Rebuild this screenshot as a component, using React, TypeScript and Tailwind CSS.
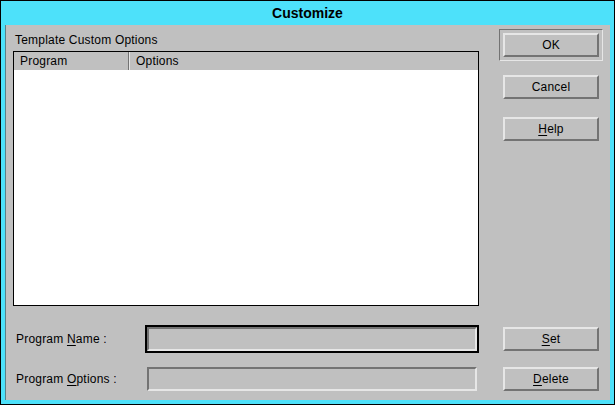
import React from "react";

const font = { fontFamily: '"Liberation Sans", Arial, sans-serif' };

function Button({ children }: { children: React.ReactNode }) {
    return (
        <div className="w-[96px] h-[24px] flex items-center justify-center border-2 border-t-[#e6e6e6] border-l-[#e6e6e6] border-b-[#737373] border-r-[#737373] text-[12px] tracking-[0.2px] text-black">
            {children}
        </div>
    );
}

function Field({ focused }: { focused?: boolean }) {
    return (
        <div className={focused ? "w-[334px] h-[28px] -m-[2px] border-2 border-black" : "w-[330px] h-[24px]"}>
            <div className="w-[330px] h-[24px] border-2 border-t-[#737373] border-l-[#737373] border-b-[#e6e6e6] border-r-[#e6e6e6] bg-[#c0c0c0]" />
        </div>
    );
}

export default function App() {
    return (
        <div style={font} className="w-[615px] h-[405px] bg-[#4de1fa] border border-black flex flex-col px-[4px] pb-[4px]">
            {/* title bar */}
            <div className="h-[24px] flex items-center justify-center text-[14px] font-bold text-black">
                Customize
            </div>

            {/* panel */}
            <div className="flex-1 bg-[#c0c0c0] border-l border-l-[#5a7f86] flex flex-col">
                <div className="flex pl-[7px] pt-[4px]">
                    {/* left column */}
                    <div className="flex flex-col pt-[4px]">
                        <div className="h-[14px] pl-[2px] leading-[14px] text-[12px] tracking-[0.2px] text-black">Template Custom Options</div>
                        <div className="mt-[4px] w-[466px] h-[255px] border border-black flex flex-col">
                            <div className="h-[18px] flex text-[12px] tracking-[0.2px] text-black">
                                <div className="w-[114px] pl-[6px] flex items-center">Program</div>
                                <div className="w-px bg-[#737373]" />
                                <div className="w-px bg-[#e6e6e6]" />
                                <div className="flex-1 pl-[6px] flex items-center">Options</div>
                            </div>
                            <div className="flex-1 bg-white" />
                        </div>
                    </div>

                    {/* right column */}
                    <div className="ml-[20px] flex flex-col">
                        <div className="w-[104px] h-[32px] border border-t-[#737373] border-l-[#737373] border-b-[#e6e6e6] border-r-[#e6e6e6] flex items-center justify-center">
                            <Button>OK</Button>
                        </div>
                        <div className="ml-[4px] mt-[14px]">
                            <Button>Cancel</Button>
                        </div>
                        <div className="ml-[4px] mt-[18px]">
                            <Button>
                                <span className="underline underline-offset-2">H</span>elp
                            </Button>
                        </div>
                    </div>
                </div>

                {/* bottom rows */}
                <div className="mt-[21px] flex items-center h-[24px] pl-[10px]">
                    <div className="w-[131px] text-[12px] tracking-[0.2px] text-black">
                        Program <span className="underline underline-offset-2">N</span>ame :
                    </div>
                    <Field focused />
                    <div className="ml-[26px]">
                        <Button>
                            <span className="underline underline-offset-2">S</span>et
                        </Button>
                    </div>
                </div>
                <div className="mt-[16px] flex items-center h-[24px] pl-[10px]">
                    <div className="w-[131px] text-[12px] tracking-[0.2px] text-black">
                        Program <span className="underline underline-offset-2">O</span>ptions :
                    </div>
                    <Field />
                    <div className="ml-[26px]">
                        <Button>
                            <span className="underline underline-offset-2">D</span>elete
                        </Button>
                    </div>
                </div>
            </div>
        </div>
    );
}
